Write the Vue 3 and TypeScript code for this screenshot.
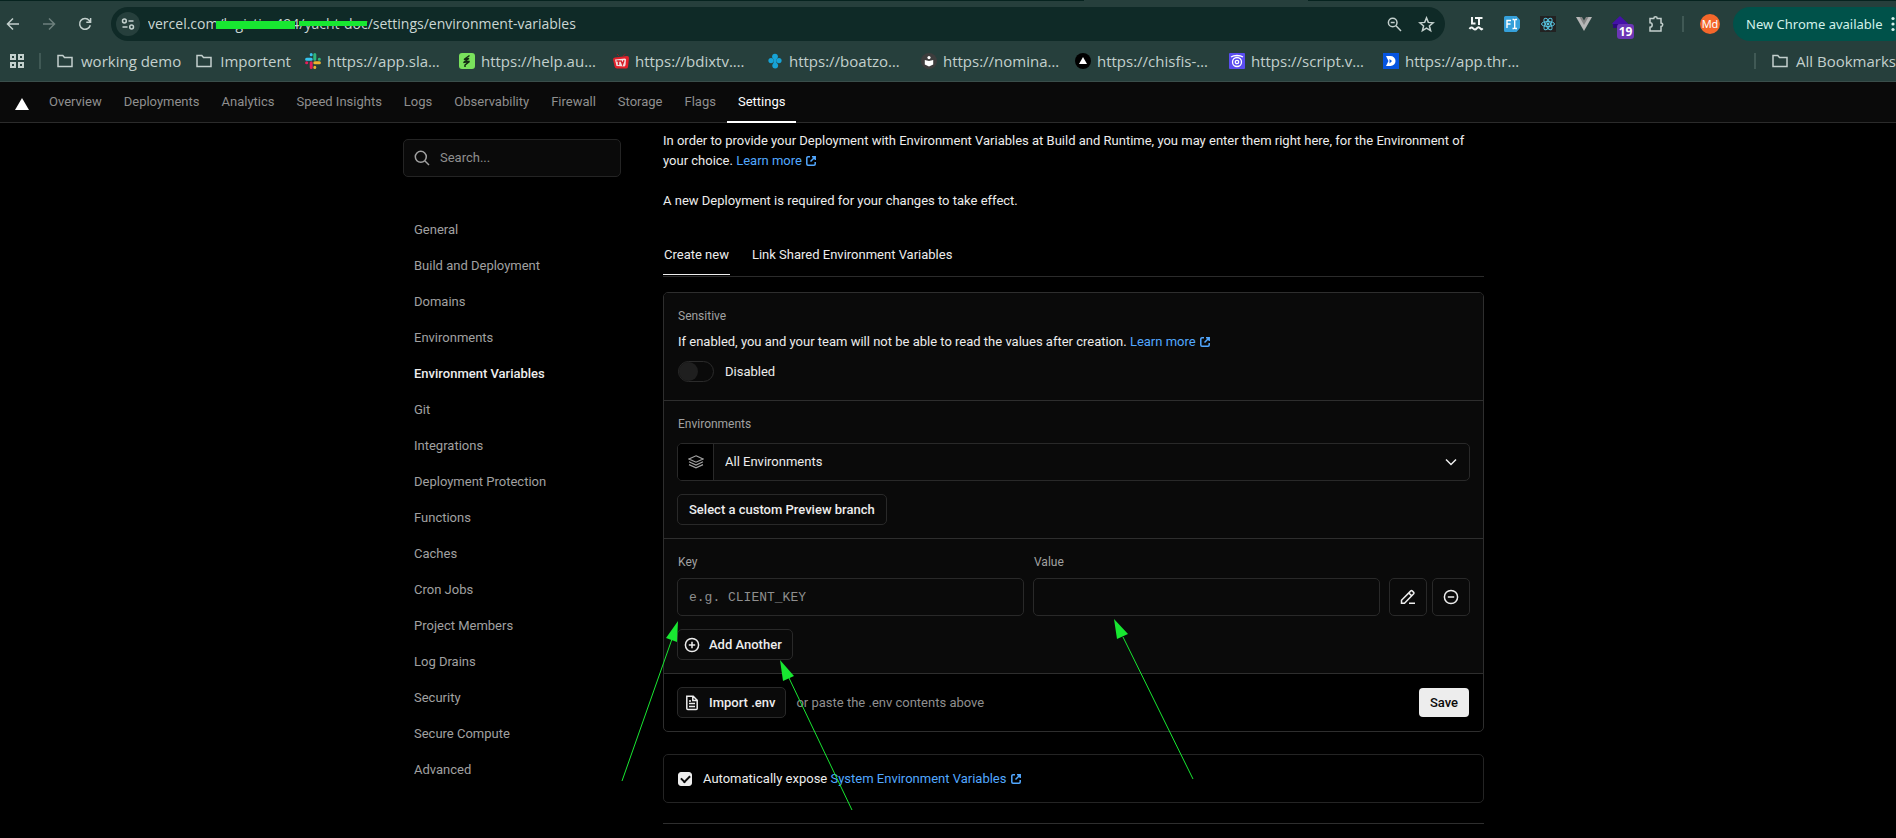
<script setup lang="ts">
import { ref } from 'vue'

const address = ref('vercel.com/logistics494/yacht-doc/settings/environment-variables')
const navItems = ['Overview', 'Deployments', 'Analytics', 'Speed Insights', 'Logs', 'Observability', 'Firewall', 'Storage', 'Flags', 'Settings']
const activeNav = ref('Settings')
const sideItems = [
  'General', 'Build and Deployment', 'Domains', 'Environments', 'Environment Variables', 'Git',
  'Integrations', 'Deployment Protection', 'Functions', 'Caches', 'Cron Jobs', 'Project Members',
  'Log Drains', 'Security', 'Secure Compute', 'Advanced',
]
const activeSide = ref('Environment Variables')
const tabs = ['Create new', 'Link Shared Environment Variables']
const activeTab = ref('Create new')
const bookmarks = [
  { icon: 'slack', text: 'https://app.sla…' },
  { icon: 'help', text: 'https://help.au…' },
  { icon: 'tv', text: 'https://bdixtv.…' },
  { icon: 'clover', text: 'https://boatzo…' },
  { icon: 'book', text: 'https://nomina…' },
  { icon: 'triangle', text: 'https://chisfis-…' },
  { icon: 'script', text: 'https://script.v…' },
  { icon: 'drive', text: 'https://app.thr…' },
]
const sensitive = ref(false)
const expose = ref(true)
const environment = ref('All Environments')
const key = ref('')
const value = ref('')
const search = ref('')
</script>

<template>
  <div class="window">
    <header class="browser">
      <div class="tab-edge"><span></span></div>
      <div class="toolbar">
        <button class="tool" aria-label="Back">
          <svg width="16" height="16" viewBox="0 0 16 16" class="line"><path d="M14 8H2.5M8 2.5 2.5 8 8 13.5" /></svg>
        </button>
        <button class="tool dim" aria-label="Forward">
          <svg width="16" height="16" viewBox="0 0 16 16" class="line"><path d="M2 8h11.5M8 2.5 13.5 8 8 13.5" /></svg>
        </button>
        <button class="tool" aria-label="Reload">
          <svg width="16" height="16" viewBox="0 0 16 16" class="line"><path d="M13.3 9.2A5.4 5.4 0 1 1 12.2 4.4L13.4 6M13.6 2v4.3H9.3" /></svg>
        </button>
        <div class="omnibox">
          <button class="site" aria-label="Site information">
            <svg width="14" height="14" viewBox="0 0 14 14" class="line"><circle cx="3.4" cy="4" r="1.9" /><path d="M7.5 4h5M1.5 10h5" /><circle cx="10.6" cy="10" r="1.9" /></svg>
          </button>
          <div class="address">
            <input v-model="address" aria-label="Address" spellcheck="false" />
            <i class="mark thick"></i><i class="mark thin"></i>
          </div>
          <button class="inner" aria-label="Zoom">
            <svg width="17" height="17" viewBox="0 0 17 17" class="line"><circle cx="6.7" cy="6.5" r="4.3" /><path d="M10 9.8 15 15M4.7 6.5h4" /></svg>
          </button>
          <button class="inner" aria-label="Bookmark">
            <svg width="17" height="17" viewBox="0 0 17 17" class="line"><path d="m8.5 1.9 1.8 4.5 4.8.4-3.7 3.1 1.2 4.8-4.1-2.6-4.1 2.6 1.2-4.8L1.9 6.8l4.8-.4z" /></svg>
          </button>
        </div>
        <button class="tool" aria-label="LanguageTool">
          <svg width="16" height="16" viewBox="0 0 16 16" fill="none" stroke="#f3f7f6" stroke-width="2"><path d="M4 1v6.5h3.5M7 2h7.5M11 2v7M1.5 13c1.2-2 2.4-2 3.6-.6s2.4 1.6 3.6 0 2.4-1.6 3.6 0 1.500 1 2.400 0" /></svg>
        </button>
        <button class="tool" aria-label="Font finder">
          <svg width="16" height="16" viewBox="0 0 16 16"><path d="M1.500 0h11L16 4v8l-3.500 4h-11A1.500 1.500 0 0 1 0 14.500v-13A1.500 1.500 0 0 1 1.500 0z" fill="#35a0da" /><path d="M3 12V4.500h4M3 8h3.500M8.500 3.500h1.200l1 .8 1-.8H13M10.700 4.300v7.400M8.500 12.500h1.200l1-.8 1 .8H13" fill="none" stroke="#fff" stroke-width="1.400" /></svg>
        </button>
        <button class="tool" aria-label="React tools">
          <svg width="16" height="16" viewBox="0 0 16 16"><path fill="#222" d="M0 0h16v16H0z" /><g fill="none" stroke="#57c4e0"><ellipse cx="8" cy="8" rx="6.500" ry="2.500" /><ellipse cx="8" cy="8" rx="6.500" ry="2.500" transform="rotate(60 8 8)" /><ellipse cx="8" cy="8" rx="6.500" ry="2.500" transform="rotate(120 8 8)" /></g><circle cx="8" cy="8" r="1.400" fill="#57c4e0" /></svg>
        </button>
        <button class="tool" aria-label="Vue tools">
          <svg width="16" height="16" viewBox="0 0 16 16"><path d="M0 1h16L8 15z" fill="#b7b7b7" /><path d="M3.500 1h9L8 9z" fill="#858585" /><path d="M6 1h4L8 4.500z" fill="#263f3c" /></svg>
        </button>
        <button class="tool counter" aria-label="19 notifications">
          <svg width="16" height="16" viewBox="0 0 16 16"><path d="M8 0 16 7.500V11H1V8.500L0 7.500z" fill="#4411a8" /><path d="M1 8h5v4H1z" fill="#2b0a7c" /></svg>
          <span class="badge">19</span>
        </button>
        <button class="tool" aria-label="Extensions">
          <svg width="18" height="18" viewBox="0 0 18 18" class="line"><path d="M3 3.500h3.800a1.700 1.700 0 0 1 3.400 0H14v4.600a1.700 1.700 0 0 1 0 3.400V16H3v-3.800a2.200 2.200 0 0 0 0-4.400z" /></svg>
        </button>
        <i class="bar"></i>
        <button class="avatar" aria-label="Profile">Md</button>
        <button class="update">New Chrome available
          <svg width="4" height="16" viewBox="0 0 4 16" fill="currentColor"><circle cx="2" cy="2.500" r="1.600" /><circle cx="2" cy="8" r="1.600" /><circle cx="2" cy="13.500" r="1.600" /></svg>
        </button>
      </div>
      <nav class="bookmarks" aria-label="Bookmarks">
        <button class="apps" aria-label="Apps">
          <svg width="14" height="14" viewBox="0 0 14 14" fill="none" stroke="currentColor" stroke-width="2"><path d="M1 1h4v4H1zM9 1h4v4H9zM1 9h4v4H1zM9 9h4v4H9z" /></svg>
        </button>
        <i class="bar"></i>
        <a v-for="name in ['working demo', 'Importent']" :key="name" href="#" class="folder">
          <svg width="16" height="14" viewBox="0 0 16 14" class="line"><path d="M1 1.500h4.800l1.700 2H15v9H1z" /></svg>{{ name }}
        </a>
        <a v-for="b in bookmarks" :key="b.text" href="#" class="bookmark">
          <svg width="16" height="16" viewBox="0 0 16 16">
            <g v-if="b.icon === 'slack'" fill="none" stroke-width="3" stroke-linecap="round">
              <path stroke="#36c5f0" d="M6.200 1.600v.1M1.600 6.200h4.600" /><path stroke="#2eb67d" d="M9.800 1.600v4.600M14.400 6.200h-.1" />
              <path stroke="#ecb22e" d="M14.400 9.800H9.800M9.800 14.400v-.1" /><path stroke="#e01e5a" d="M6.200 14.400V9.800M1.600 9.800h.1" />
            </g>
            <g v-else-if="b.icon === 'help'"><rect width="16" height="16" rx="3" fill="#79e25c" /><path d="M10.500 2.500 5 6.500l5-1-5.500 4 6-1.200L6 12v2" fill="none" stroke="#142a12" stroke-width="1.500" /></g>
            <g v-else-if="b.icon === 'tv'"><path d="m6 3-2-2M10 3l2.500-2" stroke="#8a2222" /><path d="M2 4.500 14 3q2 0 2 2l-1 9q-.3 1.500-2 1.600l-9-.2q-2-.2-2.400-2L0 6.500q0-2 2-2z" fill="#e3202b" /><path d="m2 6.500 10-1 1 .8-.5 6L11.500 13.500 3.500 13z" fill="#f2dede" /><path d="M3.500 8h4M5.500 8v4M8 7.500l1.500 4 1.500-4.300" fill="none" stroke="#d6202b" stroke-width="1.400" /></g>
            <g v-else-if="b.icon === 'clover'" fill="#17a3d6"><circle cx="8" cy="3.600" r="2.900" /><circle cx="4" cy="7.600" r="2.600" /><circle cx="12" cy="7.600" r="2.600" /><circle cx="8.200" cy="12.600" r="2.900" /><path d="M6.500 5h3v6h-3z" /></g>
            <g v-else-if="b.icon === 'book'"><circle cx="8" cy="8" r="8" fill="#3d3d3d" /><path d="M3.800 7 8 8l4.200-1v4.500L8 13.500l-4.200-2z" fill="#fff" /><circle cx="8" cy="4.600" r="1.600" fill="#fff" /></g>
            <g v-else-if="b.icon === 'triangle'"><circle cx="8" cy="8" r="8" fill="#000" /><path d="m8 4 4 7H4z" fill="#fff" /></g>
            <g v-else-if="b.icon === 'script'"><rect width="16" height="16" rx="1" fill="#5a4df0" /><g fill="none" stroke="#fff" stroke-width="1.300"><path d="M2 4c3-2 9-2 12 0" /><circle cx="8" cy="9" r="4.500" /><circle cx="8" cy="9" r="1.700" /></g></g>
            <g v-else><path fill="#0654e0" d="M0 0h16v16H0z" /><path d="M3 3h4.500a5 5 0 0 1 0 10H3l2.500-5z" fill="#fff" /><path d="M6.500 6v4.500L9 8z" fill="#0654e0" /></g>
          </svg>{{ b.text }}
        </a>
        <div class="all"><i class="bar"></i>
          <a href="#" class="folder"><svg width="16" height="14" viewBox="0 0 16 14" class="line"><path d="M1 1.500h4.800l1.700 2H15v9H1z" /></svg>All Bookmarks</a>
        </div>
      </nav>
    </header>

    <nav class="topnav" aria-label="Project">
      <a href="#" class="logo" aria-label="Home"><svg width="14" height="12" viewBox="0 0 14 12"><path d="m7 0 7 12H0z" fill="#fff" /></svg></a>
      <a v-for="n in navItems" :key="n" href="#" :class="{ active: n === activeNav }" @click.prevent="activeNav = n">{{ n }}</a>
    </nav>

    <div class="page">
      <div class="layout">
        <aside>
          <label class="search">
            <svg width="16" height="16" viewBox="0 0 16 16" class="line"><circle cx="6.800" cy="6.800" r="5.500" /><path d="m11 11 4 4" /></svg>
            <input v-model="search" type="search" placeholder="Search..." aria-label="Search settings" />
          </label>
          <nav class="side" aria-label="Settings">
            <a v-for="s in sideItems" :key="s" href="#" :class="{ active: s === activeSide }" @click.prevent="activeSide = s">{{ s }}</a>
          </nav>
        </aside>

        <main>
          <p class="intro">In order to provide your Deployment with Environment Variables at Build and Runtime, you may enter them right here, for the Environment of your choice.
            <a href="#" class="link">Learn more <svg width="10" height="10" viewBox="0 0 10 10"><path d="M4 .8H2A1.200 1.200 0 0 0 .8 2v6A1.200 1.200 0 0 0 2 9.200h6A1.200 1.200 0 0 0 9.200 8V6M6 .8h3.200V4M9 1 4.500 5.500" /></svg></a>
          </p>
          <p class="intro">A new Deployment is required for your changes to take effect.</p>

          <div class="tabs" role="tablist">
            <button v-for="t in tabs" :key="t" role="tab" :aria-selected="t === activeTab" @click="activeTab = t">{{ t }}</button>
          </div>

          <form class="card" @submit.prevent>
            <section>
              <h2>Sensitive</h2>
              <p class="note">If enabled, you and your team will not be able to read the values after creation.
                <a href="#" class="link">Learn more <svg width="10" height="10" viewBox="0 0 10 10"><path d="M4 .8H2A1.200 1.200 0 0 0 .8 2v6A1.200 1.200 0 0 0 2 9.200h6A1.200 1.200 0 0 0 9.200 8V6M6 .8h3.200V4M9 1 4.500 5.500" /></svg></a>
              </p>
              <label class="toggle"><input v-model="sensitive" type="checkbox" role="switch" />{{ sensitive ? 'Enabled' : 'Disabled' }}</label>
            </section>

            <section>
              <label class="label" for="environment">Environments</label>
              <div class="select">
                <span class="cell"><svg width="16" height="14" viewBox="0 0 16 14"><path d="M8 .8 15 4 8 7.200 1 4zM1 6.800 8 10l7-3.200M1 9.600l7 3.200 7-3.200" /></svg></span>
                <select id="environment" v-model="environment"><option>All Environments</option></select>
                <svg class="chevron line" width="12" height="8" viewBox="0 0 12 8"><path d="m1 1.500 5 5 5-5" /></svg>
              </div>
              <button type="button" class="btn">Select a custom Preview branch</button>
            </section>

            <section>
              <div class="pair">
                <div class="field"><label class="label" for="key">Key</label><input id="key" v-model="key" type="text" placeholder="e.g. CLIENT_KEY" /></div>
                <div class="field"><label class="label" for="value">Value</label><input id="value" v-model="value" type="text" /></div>
                <div class="actions">
                  <button type="button" class="square" aria-label="Edit">
                    <svg width="16" height="16" viewBox="0 0 16 16" class="line"><path d="M1.500 14.200v-3L10.800 1.900a1 1 0 0 1 1.400 0l1.500 1.500a1 1 0 0 1 0 1.400L4.500 14.200zM8.800 4l2.900 2.900M9 14.200h6" /></svg>
                  </button>
                  <button type="button" class="square" aria-label="Remove">
                    <svg width="16" height="16" viewBox="0 0 16 16" class="line"><circle cx="8" cy="8" r="6.600" /><path d="M4.800 8h6.400" /></svg>
                  </button>
                </div>
              </div>
              <button type="button" class="btn with-icon">
                <svg width="16" height="16" viewBox="0 0 16 16" class="line"><circle cx="8" cy="8" r="6.600" /><path d="M4.800 8h6.400M8 4.800v6.400" /></svg>Add Another
              </button>
            </section>

            <footer>
              <button type="button" class="btn with-icon">
                <svg width="16" height="16" viewBox="0 0 16 16" class="line"><path d="M2.800 1.200h6.400l4 4v8.300a1 1 0 0 1-1 1H3.800a1 1 0 0 1-1-1zM8.800 1.200v4.200h4.400M5 6h2M5 8.600h6M5 11.400h6" /></svg>Import .env
              </button>
              <span class="hint">or paste the .env contents above</span>
              <button type="submit" class="save">Save</button>
            </footer>
          </form>

          <div class="expose">
            <input id="expose" v-model="expose" type="checkbox" />
            <span><label for="expose">Automatically expose</label>{{ ' ' }}<a href="#" class="link">System Environment Variables <svg width="10" height="10" viewBox="0 0 10 10"><path d="M4 .8H2A1.200 1.200 0 0 0 .8 2v6A1.200 1.200 0 0 0 2 9.200h6A1.200 1.200 0 0 0 9.200 8V6M6 .8h3.200V4M9 1 4.500 5.500" /></svg></a></span>
          </div>
          <hr />
        </main>

        <svg class="arrows" viewBox="403 123 1082 715" aria-hidden="true">
          <path d="M622 781 672 639M852 810 789 678M1193 779 1123 637" />
          <path class="head" d="m678 621-12 17 11 4zM780 660l14 16-11 5zM1114 619l14 15-11 5z" />
        </svg>
      </div>
    </div>
  </div>
</template>

<style>
html,
body {
  background: #000;
  overflow: hidden;
}
</style>

<style scoped>
.window {
  min-height: 100vh;
  overflow: hidden;
  background: #000;
  color: #ededed;
  font: 13px/20px Roboto, 'Liberation Sans', sans-serif;
}
.window * { box-sizing: border-box; }
button { margin: 0; padding: 0; border: 0; background: none; color: inherit; font: inherit; cursor: pointer; }
input, select { margin: 0; font: inherit; color: inherit; outline: none; }
a { color: inherit; text-decoration: none; }
svg { flex: none; display: block; }
.line { fill: none; stroke: currentColor; stroke-width: 1.500; }

.browser { height: 82px; background: #263f3c; border-bottom: 1px solid #3a4e4b; color: #c3d0cd; font-family: 'Noto Sans', 'Open Sans', sans-serif; }
.tab-edge { height: 1px; background: #06231f; display: flex; justify-content: center; }
.tab-edge span { width: 224px; margin-left: 496px; background: #263f3c; }
.toolbar { height: 46px; display: flex; align-items: center; white-space: nowrap; }
.tool { width: 36px; height: 36px; display: grid; place-items: center; flex: none; }
.toolbar > .tool:first-child { margin-left: -5px; }
.dim { color: #6d807d; }
.omnibox { flex: 1; min-width: 0; height: 34px; margin: 0 13px 0 8px; padding: 0 3px 0 5px; display: flex; align-items: center; border-radius: 17px; background: #0f2a27; }
.site { width: 24px; height: 24px; margin-right: 8px; flex: none; display: grid; place-items: center; border-radius: 50%; background: #263f3c; }
.address { position: relative; flex: 1; min-width: 0; }
.address input { width: 100%; height: 24px; padding: 0; border: 0; background: none; color: #cbd7d4; font: 14px/24px 'Open Sans', 'Noto Sans', sans-serif; }
.mark { position: absolute; background: #18e731; }
.thick { left: 68px; top: 9px; width: 79px; height: 8px; }
.thin { left: 151px; top: 9px; width: 68px; height: 5px; }
.inner { width: 32px; height: 32px; display: grid; place-items: center; flex: none; }
.counter { position: relative; }
.badge { position: absolute; left: 15px; top: 18px; width: 17px; height: 15px; border-radius: 3px; background: #6b36b5; color: #fff; font: 700 12px/15px 'Noto Sans', sans-serif; text-align: center; }
.bar { width: 2px; height: 16px; flex: none; background: #405955; }
.toolbar > .bar { margin: 0 16px 0 8px; }
.avatar { width: 20px; height: 20px; flex: none; border-radius: 50%; background: #f4672b; color: #fff; font-size: 11px; line-height: 20px; }
.update { flex: none; height: 34px; width: 176px; margin: 0 -13px 0 13px; padding-left: 13px; display: flex; align-items: center; gap: 8px; border-radius: 17px; background: #00524a; color: #d3f1ea; font-size: 13px; }
.bookmarks { height: 28px; padding-left: 10px; display: flex; align-items: center; white-space: nowrap; font: 15px/28px 'Open Sans', 'Noto Sans', sans-serif; }
.apps { width: 14px; margin-right: 15px; }
.folder { display: flex; align-items: center; gap: 8px; margin-left: 16px; }
.folder + .folder { margin-left: 15px; }
.folder + .bookmark { margin-left: 14px; }
.bookmark { width: 138px; margin-right: 16px; flex: none; display: flex; align-items: center; gap: 6px; }
.all { margin-left: auto; display: flex; align-items: center; }

.topnav { height: 41px; padding-left: 15px; display: flex; background: #0a0a0a; border-bottom: 1px solid #2b2b2b; color: #8f8f8f; }
.topnav a { height: 41px; padding: 0 11px; line-height: 40px; }
.topnav .logo { padding: 16px 0 0; margin-right: 9px; }
.topnav .active { color: #fff; border-bottom: 2px solid #fff; }

.page { padding-right: 9px; }
.layout { position: relative; max-width: 1081px; margin: 0 auto; display: grid; grid-template-columns: 218px minmax(0, 1fr); gap: 42px; }
aside { padding-top: 16px; }
.search { height: 38px; padding: 0 10px; display: flex; align-items: center; gap: 10px; border: 1px solid #242424; border-radius: 5px; background: #0a0a0a; color: #a1a1a1; }
.search input { flex: 1; min-width: 0; padding: 0; border: 0; background: none; }
input::placeholder { color: #8f8f8f; opacity: 1; }
.side { margin-top: 35px; padding-left: 11px; display: flex; flex-direction: column; color: #a1a1a1; }
.side a { line-height: 36px; }
.side .active { color: #ededed; font-weight: 500; }

main { padding-top: 8px; }
.intro { margin: 0 0 20px; }
.link { color: #52a8ff; white-space: nowrap; }
.link svg { display: inline-block; margin-left: 1px; vertical-align: -1px; fill: none; stroke: currentColor; stroke-width: 1.500; }
.tabs { height: 46px; margin-top: 20px; display: flex; gap: 21px; border-bottom: 1px solid #2b2b2b; }
.tabs button { height: 44px; padding: 4px 1px 0; border-bottom: 1px solid transparent; }
.tabs button[aria-selected='true'] { border-color: #ededed; }
.card { margin-top: 15px; border: 1px solid #2e2e2e; border-radius: 5px; }
section { padding: 13px; background: #0a0a0a; border-bottom: 1px solid #2e2e2e; }
section:first-child { padding: 13px 14px 18px; border-radius: 4px 4px 0 0; }
h2, .label { display: block; margin: 0 0 9px; font-size: 12px; line-height: 20px; font-weight: 400; color: #a1a1a1; }
h2 { margin-bottom: 6px; }
.label { padding-left: 1px; }
.note { margin: 0 0 9px; }
.toggle { height: 21px; display: flex; align-items: center; gap: 11px; }
.toggle input { appearance: none; width: 36px; height: 21px; border: 1px solid #2b2b2b; border-radius: 11px; display: flex; }
.toggle input::before { content: ''; width: 19px; height: 19px; border-radius: 50%; background: #1f1f1f; }
.toggle input:checked { justify-content: flex-end; }
.select { height: 38px; display: flex; align-items: center; border: 1px solid #292929; border-radius: 5px; overflow: hidden; }
.cell { width: 36px; height: 36px; display: grid; place-items: center; background: #000; border-right: 1px solid #292929; fill: none; stroke: #a1a1a1; stroke-width: 1.200; }
select { appearance: none; flex: 1; height: 36px; padding: 0 11px; border: 0; background: transparent; }
.chevron { margin-right: 12px; }
.btn { height: 31px; padding: 0 11px; display: flex; align-items: center; border: 1px solid #292929; border-radius: 5px; background: #0a0a0a; font-weight: 500; }
section .btn { margin-top: 13px; }
.with-icon { padding: 0 10px 0 6px; gap: 9px; }
.pair { display: flex; align-items: flex-end; gap: 9px; }
.field { flex: 1; min-width: 0; }
.field .label { margin-bottom: 6px; }
.field input { display: block; width: 100%; height: 38px; padding: 0 11px; border: 1px solid #292929; border-radius: 5px; background: #0a0a0a; font-family: 'Liberation Mono', monospace; }
.actions { display: flex; gap: 5px; }
.square { width: 38px; height: 38px; display: grid; place-items: center; border: 1px solid #292929; border-radius: 5px; }
footer { padding: 13px 14px 13px 13px; display: flex; align-items: center; }
.hint { margin-left: 10px; color: #8f8f8f; }
.save { height: 29px; margin-left: auto; padding: 0 11px; border-radius: 4px; background: #ededed; color: #0a0a0a; font-weight: 500; }
.expose { height: 49px; margin-top: 22px; padding: 0 14px; display: flex; align-items: center; gap: 11px; border: 1px solid #242424; border-radius: 5px; }
.expose input { appearance: none; width: 14px; height: 14px; border: 1px solid #ededed; border-radius: 3px; display: grid; place-items: center; }
.expose input:checked { background: #ededed; }
.expose input:checked::before { content: ''; width: 7px; height: 4px; border: solid #0a0a0a; border-width: 0 0 2px 2px; transform: rotate(-45deg); margin-bottom: 2px; }
hr { height: 1px; margin: 20px 0 0; border: 0; background: #2e2e2e; }
.arrows { position: absolute; left: 0; top: 0; width: 1082px; height: 715px; fill: none; stroke: #18e731; pointer-events: none; }
.head { fill: #18e731; stroke: none; }
</style>
